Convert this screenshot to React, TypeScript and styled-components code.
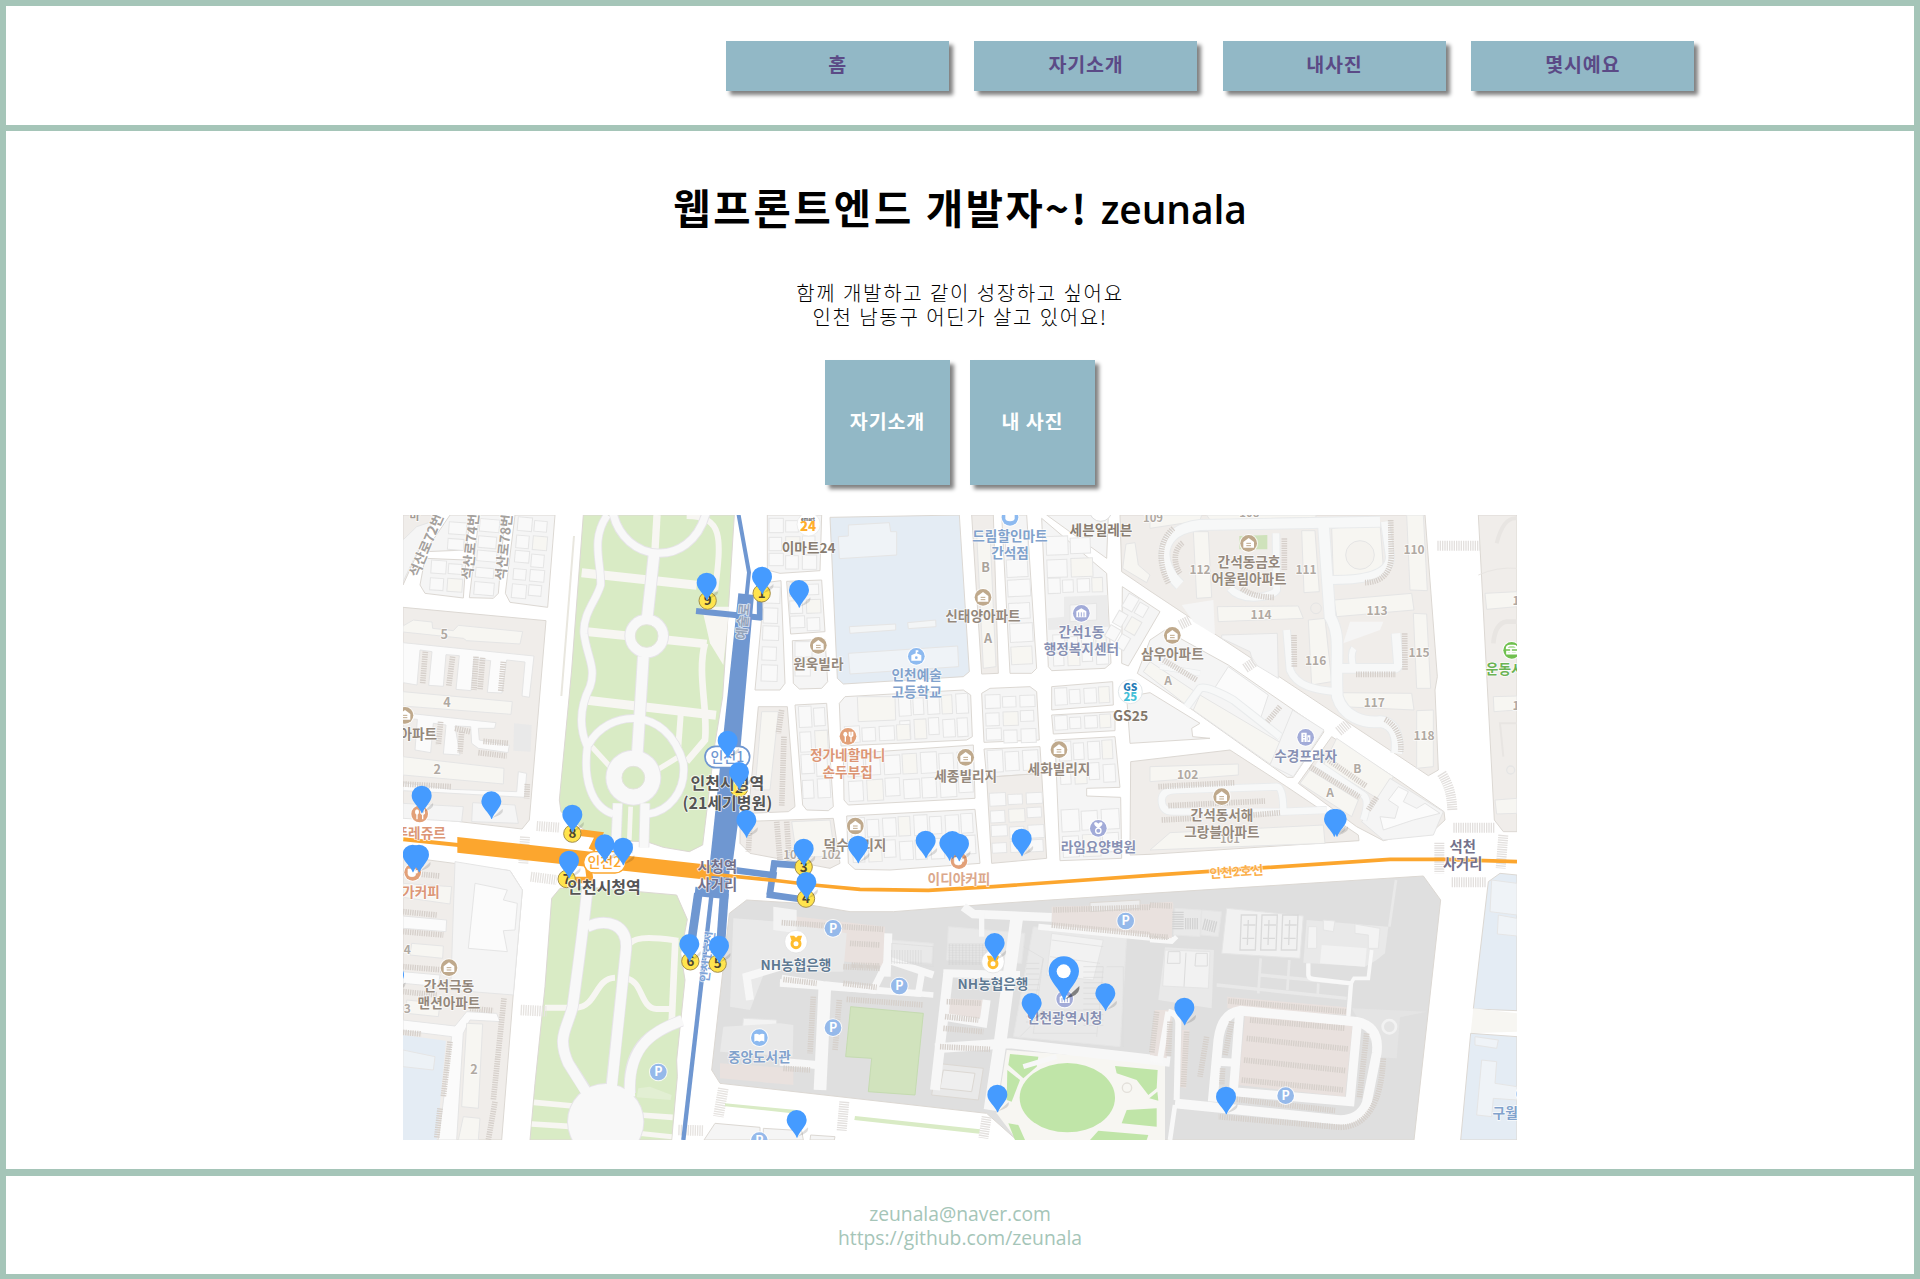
import React from "react";
import styled, { createGlobalStyle } from "styled-components";

const GlobalStyle = createGlobalStyle`
  * { box-sizing: border-box; }
  body { margin: 0; background: #fff; }
`;

const hangul = `"Noto Sans CJK KR", sans-serif`;
const mixed = `"Open Sans", "Noto Sans CJK KR", sans-serif`;
const green = "#a5c5b8";
const blue = "#92b8c6";

const Page = styled.div`
  display: flex;
  flex-direction: column;
  height: 1279px;
  border: 6px solid ${green};
  border-bottom-width: 5px;
  background: #fff;
  color: #000;
  font-family: ${mixed};
`;

const Header = styled.header`
  flex: none;
  height: 125px;
  padding: 35px 219.8px 0 0;
  display: flex;
  justify-content: flex-end;
  border-bottom: 6px solid ${green};
`;

const Nav = styled.nav`
  display: flex;
  gap: 25.4px;
`;

const NavButton = styled.a`
  display: flex;
  width: 223px;
  height: 50px;
  padding-bottom: 4px;
  align-items: center;
  justify-content: center;
  background: ${blue};
  box-shadow: 4px 4px 4px gray;
  color: #5b4a86;
  font: 700 19.5px/24px ${hangul};
  letter-spacing: 0.8px;
  text-decoration: none;
`;

const Main = styled.main`
  flex: 1;
  display: flex;
  flex-direction: column;
  align-items: center;
`;

const Title = styled.h1`
  display: flex;
  align-items: baseline;
  gap: 12px;
  margin: 46px 0 0;
  height: 60px;
  font: 700 40.5px/60px ${hangul};
`;

const TitleWord = styled.span<{ $spacing: number; $latin?: boolean }>`
  letter-spacing: ${(p) => p.$spacing}px;
  font-family: ${(p) => (p.$latin ? mixed : hangul)};
  font-size: ${(p) => (p.$latin ? 39 : 40.5)}px;
  font-weight: ${(p) => (p.$latin ? 600 : 700)};
`;

const Intro = styled.p`
  margin: 44px 0 0;
  text-align: center;
  font: 300 20px/24px ${hangul};
  letter-spacing: 1.65px;
  word-spacing: 0.6px;
`;

const Tiles = styled.div`
  display: flex;
  gap: 20px;
  margin-top: 31px;
`;

const Tile = styled.a`
  display: flex;
  width: 125px;
  height: 125px;
  padding-bottom: 3px;
  align-items: center;
  justify-content: center;
  background: ${blue};
  box-shadow: 4px 4px 4px gray;
  color: #fff;
  font: 700 19.5px/24px ${hangul};
  letter-spacing: 0.9px;
  text-decoration: none;
`;

const MapCanvas = styled.svg`
  display: block;
  width: 1114px;
  height: 625px;
  margin-top: 30px;
  font-family: ${hangul};
`;

const Footer = styled.footer`
  flex: none;
  height: 105px;
  border-top: 7px solid ${green};
  padding-top: 26px;
  text-align: center;
  color: ${green};
  font: 400 19.3px/24px ${mixed};
`;

const Line = styled.div``;

type Shape = [points: string, fill: string, outline?: string];
const L = "#f5f5f5";
const B = "#f0edea";
const C = "#f7f6f2";
const W = "#fbfbfb";
const G = "#d9ebc5";
const S = "#e4ecf4";
const K = "#dfdfdf";
const E = "#e9e9e9";
const P = "#e9e1de";
const O = "#dcd8d3";
const T = "#e5e5e5";

const Shapes = ({ items }: { items: Shape[] }) => (
  <>
    {items.map(([points, fill, outline], i) => (
      <polygon key={i} points={points} fill={fill} stroke={outline ?? "none"} strokeWidth={3} strokeLinejoin="round" />
    ))}
  </>
);

const Strokes = ({ items, color }: { items: [string, number][]; color: string }) => (
  <g fill="none" stroke={color}>
    {items.map(([d, w], i) => (
      <path key={i} d={d} strokeWidth={w} />
    ))}
  </g>
);

const Hatch = ({ items, width = 17, color = "#d6d0cb" }: { items: string[]; width?: number; color?: string }) => (
  <>
    {items.map((d, i) => (
      <path key={i} d={d} fill="none" stroke={color} strokeWidth={width} strokeDasharray="4 3" />
    ))}
  </>
);

/* Small houses are laid out as cells inside a town block. */
const Cells = ({ x, y, cols, rows, w, h, skew = 0 }: { x: number; y: number; cols: number; rows: number; w: number; h: number; skew?: number }) => (
  <g transform={`translate(${x} ${y}) rotate(${skew})`} stroke={T} strokeWidth={3}>
    {Array.from({ length: cols * rows }, (_, i) => {
      const c = i % cols;
      const r = Math.floor(i / cols);
      return (
        <rect
          key={i}
          x={c * w + 3}
          y={r * h + ((c * 7 + r * 5) % 9)}
          width={w - 7 - ((c + r) % 2) * 5}
          height={h - 9 - ((c * 3 + r) % 4) * 3}
          fill={(c * 5 + r * 3) % 7 === 1 ? C : "#f9f9f9"}
        />
      );
    })}
  </g>
);

const northWest: Shape[] = [
  ["9,15 108,15 68,95 9,225", B, O],
  ["9,90 50,50 95,35 9,215", L, T],
  ["150,15 210,15 200,120 75,125", L, O],
  ["75,145 198,150 190,264 75,250 60,225", L, O],
  ["238,15 315,15 295,250 280,265 208,263", L, O],
  ["345,15 465,15 443,292 330,277 316,250", L, O],
  ["9,292 438,332 388,930 366,957 9,915", B, O],
  ["9,348 40,330 96,336 98,355 160,362 175,346 368,365 360,402 200,392 190,385 9,366", C, T],
  ["9,398 402,438 388,562 366,558 375,456 320,450 306,549 262,547 272,452 222,446 213,542 168,538 178,437 138,434 130,529 86,526 96,425 60,420 51,525 9,518", W, T],
  ["9,545 337,575 333,613 9,588", C, T],
  ["9,608 288,638 284,655 235,655 238,690 328,706 324,728 235,715 215,700 212,650 165,648 180,735 130,732 138,645 100,640 92,728 45,720 52,628 9,625", W, T],
  ["9,740 312,775 310,822 9,795", C, T],
  ["342,640 395,645 392,725 340,722", E],
  ["9,818 155,838 350,845 355,785 380,790 374,862 9,842", W, T],
  ["218,878 345,885 355,940 215,935", L, T],
  ["9,880 190,890 185,935 9,925", L, T],
  ["550,15 1003,15 985,300 968,560 945,700 908,1005 868,1025 790,1012 740,995 640,992 560,965 483,905 478,870 515,480", G, O],
  ["905,290 988,290 970,465 930,400", C],
  ["525,78 519,78 481,558 487,558", "#e9e7df"],
  ["455,1165 480,1135 545,1130 830,1155 862,1228 842,1330 855,1410 830,1650 832,1700 815,1890 390,1890 405,1720 435,1430", G, O],
];

const southWest: Shape[] = [
  ["9,110 330,152 367,210 340,520 305,960 9,960", B, O],
  ["165,125 330,152 367,210 340,525 152,510", L, T],
  ["225,190 322,210 310,240 352,250 345,330 310,332 322,395 205,385", W, T],
  ["9,190 155,200 150,252 9,232", C, T],
  ["9,288 140,300 138,335 9,325", W, T],
  ["35,370 130,378 128,415 30,405", C, T],
  ["20,540 120,550 115,590 20,580", C, T],
  ["9,455 120,465 115,500 9,490", W, T],
  ["9,600 165,618 200,575 290,580 300,605 210,600 190,640 170,960 115,960 155,650 9,632", W, T],
  ["200,610 248,612 235,865 185,860", C, T],
  ["190,890 240,895 235,960 175,960", C, T],
  ["9,645 138,662 110,960 9,960", S],
  ["9,690 105,710 100,750 9,740", "#edf2f6", T],
];

const center: Shape[] = [
  ["-38,30 -38,15 125,15 120,182 0,190 -38,180", L, O],
  ["-45,218 3,212 15,520 0,540 -75,540", L, O],
  ["20,214 125,210 135,365 32,372", L, O],
  ["37,392 135,388 143,515 125,535 58,537 40,520", L, O],
  ["150,22 538,15 568,485 550,500 190,522 172,505", S, O],
  ["205,45 328,38 332,65 350,65 350,135 178,146 175,80 205,78", "#eff3f7", T],
  ["208,350 347,342 347,360 210,370", "#f3f5f6", T],
  ["383,338 467,330 468,350 385,356", "#f3f5f6", T],
  ["205,430 533,408 536,470 210,492", "#eff3f7", T],
  ["178,580 195,560 550,540 572,555 577,680 560,690 183,708", L, O],
  ["232,560 345,560 347,630 235,635", C, T],
  ["190,732 580,705 585,865 205,885 192,870", L, O],
  ["45,585 140,580 160,890 145,902 80,900 68,885", L, O],
  ["-65,590 22,590 45,890 25,905 -95,910", B, O],
  ["-55,605 -5,605 -30,840 -75,840", C, T],
  ["605,550 630,535 750,530 770,545 778,690 612,697", L, O],
  ["612,717 780,710 785,790 620,802", L, O],
  ["620,802 785,790 800,1045 635,1060", B, O],
  ["575,15 640,15 655,490 605,492", B, O],
  ["590,70 630,70 648,470 610,475", C, T],
  ["665,15 740,15 770,475 755,490 690,490", L, O],
  ["785,25 980,190 993,460 975,475 815,482 805,470", L, O],
  ["800,15 985,15 980,145", L, O],
  ["1027,230 1140,305 1045,468 1025,460", L, O],
  ["815,530 998,515 1000,585 815,600", L, O],
  ["815,615 1005,605 1005,662 820,672", L, O],
  ["825,690 1005,680 1020,832 920,835 920,858 1022,862 1025,1045 840,1052", L, O],
  ["200,918 585,898 600,1060 330,1080 225,1078 205,1060", L, O],
  ["-120,935 160,925 180,1060 150,1075 -90,1030 -120,1000", B, O],
  ["35,935 150,930 165,1040 50,1040", C, T],
];

const communityCenter: Shape[] = [
  ["852,260 982,255 985,350 805,360 803,325 852,320", "#ebebeb"],
  ["870,285 950,280 950,330 870,335", "#f5f5f5", T],
];

const northEast: Shape[] = [
  ["-90,15 825,15 862,500 855,540 865,780 835,797 0,243 -85,185", B, O],
  ["-72,102 -45,98 -35,165 0,195 -10,218 -82,175", C, T],
  ["0,15 155,15 150,32 0,55", C, T],
  ["170,15 498,15 498,22 180,30", C, T],
  ["130,65 175,65 185,262 140,265", C, T],
  ["268,78 352,75 352,118 268,118", "#cfe2bb"],
  ["455,62 495,62 508,245 462,248", C, T],
  ["770,15 820,15 832,242 780,240", C, T],
  ["545,55 690,40 700,170 660,200 550,205", C, T],
  ["202,290 445,288 460,325 205,335", C, T],
  ["552,270 785,250 792,300 560,320", C, T],
  ["475,330 525,325 545,515 485,525", C, T],
  ["790,310 830,312 842,535 800,535", C, T],
  ["570,548 785,550 792,600 575,590", C, T],
  ["800,602 850,600 850,770 800,775", C, T],
  ["95,285 190,270 195,375 130,335", L],
  ["215,375 382,370 385,505 310,460 300,425 215,385", L, T],
  ["600,335 700,335 690,360 580,400", L],
  ["0,390 45,360 235,465 510,655 522,665 430,802 412,802 100,580 -38,490", L, O],
  ["-20,485 0,455 135,545 105,582", C, T],
  ["235,470 355,555 330,630 190,540", W, T],
  ["150,555 395,700 360,762 130,600", C, T],
  ["428,600 522,660 430,800 360,765", L, T],
  ["545,680 730,800 882,905 885,930 858,955 700,992 620,950 445,820", B, O],
  ["560,685 730,800 690,870 520,765", C, T],
  ["480,780 625,870 605,920 450,820", C, T],
  ["720,805 880,905 850,975 700,990 635,935", L, T],
  ["745,830 775,845 760,875 800,895 825,880 870,910 790,930 700,960 690,920 735,925 745,890 715,870", W, T],
  ["-70,560 0,548 150,640 125,655 128,680 180,685 -60,700", L, O],
  ["-58,755 240,720 410,830 625,975 627,992 0,1033 -60,1035", B, O],
  ["0,770 265,762 265,795 0,815", C, T],
  ["60,968 520,945 525,1000 0,1020", C, T],
  ["985,15 1101,15 1101,965 1060,965 1033,930", B, O],
  ["1005,250 1101,245 1101,290 1010,298", C, T],
  ["1030,560 1101,558 1101,600 1032,605", C, T],
  ["1035,870 1101,865 1101,910 1040,912", C, T],
];

const civic: Shape[] = [
  ["988,1210 1040,1170 1200,1180 1350,1205 1480,1205 1800,1180 2250,1150 3070,1098 3122,1170 3042,1890 1850,1890 1760,1810 1140,1740 960,1720 935,1680", K, O],
  ["1150,1215 1455,1250 1450,1370 1150,1330", P],
  ["1000,1225 1140,1235 1340,1270 1330,1385 1190,1385 1100,1370 1050,1500 990,1490", E],
  ["1120,1190 1190,1200 1190,1270 1120,1260", "#f3f3f3"],
  ["1030,1525 1130,1530 1130,1600 1025,1590", "#f3f3f3", T],
  ["1140,1540 1180,1545 1178,1640 960,1625 970,1550", E],
  ["960,1660 1180,1675 1180,1725 960,1705", P],
  ["1475,1290 1600,1300 1595,1360 1475,1350", E, T],
  ["1645,1250 1875,1270 1865,1360 1640,1350", E, T],
  ["1955,1190 2320,1180 2315,1285 1955,1250", P],
  ["2070,1178 2220,1170 2220,1195 2070,1205", "#eee", O],
  ["1900,1250 2180,1280 2160,1610 1840,1580", E, T],
  ["1955,1270 2110,1290 2080,1410 1940,1395", "#f2f2f2", T],
  ["1640,1465 1750,1470 1740,1525 1635,1515", P],
  ["1610,1660 1750,1675 1735,1770 1595,1755", E, O],
  ["1630,1680 1725,1690 1715,1745 1620,1735", "#efefef", O],
  ["1352,1490 1570,1510 1545,1755 1405,1745 1415,1645 1337,1640", "#d1e3bd", "#c5dbb1"],
  ["1820,1620 2295,1655 2295,1890 1850,1890 1790,1810", C],
  ["1830,1632 1915,1640 1910,1670 1870,1705 1825,1665", "#c0e5a8"],
  ["1822,1680 1860,1710 1835,1775 1820,1770", "#c0e5a8"],
  ["2145,1668 2273,1680 2270,1735 2245,1755 2210,1710 2150,1690", "#c0e5a8"],
  ["2248,1765 2272,1745 2275,1772", "#c0e5a8"],
  ["2180,1800 2270,1795 2270,1850 2165,1840", "#c0e5a8"],
  ["2095,1862 2245,1875 2240,1890 2070,1890", "#c0e5a8"],
  ["1825,1840 1855,1845 1875,1890 1845,1890", "#c0e5a8"],
  ["1365,1818 1740,1858 1738,1871 1363,1830", G],
  ["975,1780 1190,1800 1190,1811 975,1789", G],
  ["912,1890 945,1840 1080,1852 1080,1890", L, O],
  ["1090,1855 1205,1862 1210,1890 1090,1890", L, O],
  ["1232,1875 1305,1880 1303,1890 1230,1890", L, O],
];

const cityEast: Shape[] = [
  ["0,250 68,245 65,355 0,345", P],
  ["75,265 155,270 150,350 70,345", E, T],
  ["155,270 215,275 205,350 152,345", E, T],
  ["230,265 460,288 450,415 215,400", "#f1f1f1", T],
  ["45,382 192,390 185,565 25,540", E],
  ["45,390 180,395 175,505 38,498", "#f2f2f2", T],
  ["470,300 715,320 705,400 680,420 645,440 460,428", E],
  ["475,320 500,320 500,385 472,385", "#f3f3f3", T],
  ["515,375 650,385 645,440 510,430", "#f2f2f2"],
  ["520,300 555,303 550,335 520,330", "#f3f3f3", T],
  ["615,312 690,325 685,385 655,385 655,345 615,340", "#f3f3f3", T],
  ["605,565 830,575 750,592 740,715 690,712", "#e4e4e4"],
  ["232,530 590,562 590,585 232,565", P],
  ["285,585 608,615 585,830 265,795", P],
  ["15,570 70,570 50,715 0,705", P],
  ["95,630 118,630 108,805 90,800", P],
  ["1015,185 1050,160 1101,165 1101,572 970,567", S, O],
  ["1025,180 1101,190 1101,285 1020,275", "#eff3f7", T],
  ["1045,285 1101,295 1101,348 1042,342", "#eff3f7", T],
  ["970,565 1101,580 1101,635 962,640", C],
  ["962,640 1101,650 1101,960 932,960", S, O],
  ["995,720 1040,725 1035,790 1101,800 1101,840 1030,835 1025,890 980,885", "#eff3f7", T],
  ["975,650 1045,660 1040,685 975,675", "#eff3f7", T],
];

type Label = [text: string, x: number, y: number, color: string, size?: number, rotate?: number];
const brown = "#94887c";
const violet = "#8790b3";
const navy = "#81a2cc";
const labels: Label[] = [
  ["마", 44, 30, "#a39b94", 34],
  ["석산로72번", 92, 112, "#a5a19d", 41, -67],
  ["석산로74번", 226, 112, "#a5a19d", 41, -84],
  ["석산로78번길", 328, 95, "#a5a19d", 41, -84],
  ["5", 133, 387, "#b0a9a2", 38],
  ["4", 141, 590, "#b0a9a2", 38],
  ["2", 112, 793, "#b0a9a2", 38],
  ["아파트", 55, 686, brown],
  ["뚜레쥬르", 62, 984, "#dc9676"],
  ["메가커피", 44, 1160, "#dc9676"],
  ["4", 22, 1331, "#b0a9a2", 36],
  ["3", 22, 1508, "#b0a9a2", 36],
  ["2", 222, 1693, "#b0a9a2", 38],
  ["간석극동", 147, 1444, brown],
  ["맨션아파트", 147, 1494, brown],
  ["시청역", 952, 1087, "#74718b", 43],
  ["사거리", 952, 1139, "#74718b", 43],
  ["이마트24", 1226, 128, "#887d71"],
  ["원욱빌라", 1255, 476, brown],
  ["인천예술", 1550, 510, navy],
  ["고등학교", 1550, 561, navy],
  ["드림할인마트", 1830, 92, navy],
  ["간석점", 1830, 143, navy],
  ["세븐일레븐", 2103, 74, "#887d71"],
  ["B", 1757, 186, "#aaa39b", 38],
  ["A", 1764, 398, "#aaa39b", 38],
  ["신태양아파트", 1749, 333, brown],
  ["간석1동", 2044, 382, violet],
  ["행정복지센터", 2044, 431, violet],
  ["삼우아파트", 2317, 447, brown],
  ["GS25", 2192, 632, "#82776a", 42],
  ["정가네할머니", 1343, 750, "#dc9676"],
  ["손두부집", 1343, 801, "#dc9676"],
  ["세종빌리지", 1697, 813, brown],
  ["세화빌리지", 1977, 792, brown],
  ["109", 2259, 36, "#b0a9a2", 34],
  ["108", 2548, 20, "#b0a9a2", 34],
  ["간석동금호", 2547, 171, brown],
  ["어울림아파트", 2547, 221, brown],
  ["110", 3042, 132, "#b0a9a2", 36],
  ["111", 2718, 191, "#b0a9a2", 36],
  ["112", 2400, 191, "#b0a9a2", 36],
  ["113", 2931, 316, "#b0a9a2", 36],
  ["114", 2583, 327, "#b0a9a2", 36],
  ["115", 3057, 442, "#b0a9a2", 36],
  ["116", 2747, 464, "#b0a9a2", 36],
  ["117", 2923, 590, "#b0a9a2", 36],
  ["118", 3072, 689, "#b0a9a2", 36],
  ["102", 2363, 807, "#b0a9a2", 36],
  ["101", 2490, 1000, "#b0a9a2", 34],
  ["1", 3348, 286, "#b0a9a2", 36],
  ["1", 3348, 600, "#b0a9a2", 36],
  ["A", 2304, 526, "#b0a9a2", 36],
  ["A", 2790, 862, "#b0a9a2", 36],
  ["B", 2872, 788, "#b0a9a2", 36],
  ["수경프라자", 2717, 753, violet],
  ["운동시설", 3333, 491, "#6bb354"],
  ["간석동서해", 2466, 931, brown],
  ["그랑블아파트", 2466, 982, brown],
  ["101", 1180, 1046, "#b0a9a2", 34],
  ["102", 1293, 1046, "#b0a9a2", 34],
  ["덕수빌리지", 1365, 1020, brown],
  ["이디야커피", 1677, 1122, "#dba88c"],
  ["라임요양병원", 2095, 1026, violet],
  ["석천", 3188, 1025, "#74718b", 43],
  ["사거리", 3188, 1078, "#74718b", 43],
  ["인천2호선", 2510, 1099, "#fbae4a", 38, -4],
  ["NH농협은행", 1188, 1380, "#5f7a93"],
  ["NH농협은행", 1779, 1438, "#5f7a93"],
  ["중앙도서관", 1078, 1655, navy],
  ["인천광역시청", 1994, 1539, violet],
  ["구월중학교", 3372, 1825, navy],
  ["인천1호선", 935, 1342, "#7da3d8", 36, -83],
  ["예술로", 1043, 336, "#94a3ba", 40, -84],
];

const MapText = ({ item: [text, x, y, color, size = 41, rotate] }: { item: Label }) => (
  <text
    x={x}
    y={y}
    fill={color}
    stroke="#fff"
    strokeOpacity={0.75}
    strokeWidth={5}
    strokeLinejoin="round"
    paintOrder="stroke"
    fontSize={size}
    fontWeight={700}
    textAnchor="middle"
    transform={rotate ? `rotate(${rotate} ${x} ${y})` : undefined}
  >
    {text}
  </text>
);

const Badge = ({ x, y, color, children }: { x: number; y: number; color: string; children?: React.ReactNode }) => (
  <g transform={`translate(${x} ${y})`}>
    <circle r={28} fill="#fff" opacity={0.8} />
    <circle r={25} fill={color} />
    {children}
  </g>
);

const House = ({ x, y }: { x: number; y: number }) => (
  <Badge x={x} y={y} color="#bfa98c">
    <path d="M0-16 16-4V13H-16V-4Z" fill="#fff" />
    <path d="M-7 0H7M-7 7H7" stroke="#bfa98c" strokeWidth={3} />
  </Badge>
);

const Food = ({ x, y }: { x: number; y: number }) => (
  <Badge x={x} y={y} color="#e2a078">
    <ellipse cx={-8} cy={-6} rx={6} ry={8} fill="#fff" />
    <path d="M-8 0V16M9 0V16M4-14V-2Q9 4 14-2V-14M9-14V2" stroke="#fff" strokeWidth={4} fill="none" />
  </Badge>
);

const Cafe = ({ x, y }: { x: number; y: number }) => (
  <Badge x={x} y={y} color="#e2a078">
    <path d="M-14-10H9V5Q9 13-2 13T-14 5ZM9-6h5v8H9" fill="#fff" stroke="#fff" strokeWidth={2} />
  </Badge>
);

const Parking = ({ x, y }: { x: number; y: number }) => (
  <Badge x={x} y={y} color="#95b9ea">
    <text y={13} textAnchor="middle" fill="#fff" fontSize={37} fontWeight={700}>P</text>
  </Badge>
);

const Office = ({ x, y }: { x: number; y: number }) => (
  <Badge x={x} y={y} color="#a2abd8">
    <path d="M-15-6 0-15 15-6V12H-15Z" fill="#fff" />
    <path d="M-8-3V10M0-3V10M8-3V10" stroke="#a2abd8" strokeWidth={3} />
  </Badge>
);

const Bank = ({ x, y }: { x: number; y: number }) => (
  <g transform={`translate(${x} ${y})`}>
    <circle r={34} fill="#fff" stroke="#ddd" strokeWidth={2} />
    <path d="M-18-18H-6L0-12 6-18H18L14-4H-14Z" fill="#ffbd2e" />
    <circle cy={6} r={12} fill="none" stroke="#ffbd2e" strokeWidth={9} />
  </g>
);

const exits: [string, number, number][] = [
  ["9", 923, 272], ["1", 1085, 250], ["2", 1017, 835], ["8", 517, 971], ["7", 500, 1107],
  ["6", 871, 1354], ["5", 953, 1361], ["3", 1211, 1071], ["4", 1218, 1166],
];

const Exit = ({ label, x, y }: { label: string; x: number; y: number }) => (
  <g transform={`translate(${x} ${y})`}>
    <circle r={26} fill="#ffe44d" stroke="#a58f4a" strokeWidth={3} />
    <text y={14} textAnchor="middle" fill="#4d4630" fontSize={40} fontWeight={700}>{label}</text>
  </g>
);

const pins: [number, number][] = [
  [920, 218], [1086, 200], [1197, 240], [983, 692], [1017, 786], [65, 857], [274, 874], [517, 914], [1039, 930],
  [-18, 1395], [38, 1034], [57, 1034], [614, 1003], [669, 1013], [507, 1052], [868, 1302], [957, 1307],
  [1211, 1016], [1374, 1007], [1219, 1116], [1577, 992], [1657, 993], [1648, 999], [1677, 1001], [1865, 986],
  [1784, 1299], [1895, 1479], [2116, 1450], [1792, 1754], [1190, 1830], [2353, 1493], [2478, 1760], [2802, 927], [2810, 927],
];

const Pin = ({ x, y }: { x: number; y: number }) => (
  <g transform={`translate(${x} ${y})`}>
    <path d="M3 50 34 22Q38 35 20 43Z" fill="#000" opacity={0.13} />
    <path d="M-30 0A30 30 0 0 1 30 0C30 18 8 34 2 53H0C-6 34-30 20-30 0Z" fill="#459bff" />
  </g>
);

const NeighbourhoodMap = () => (
  <MapCanvas viewBox="9 15 3342 1875" preserveAspectRatio="none" role="img" aria-label="인천시청 지도">
    <rect x={9} y={15} width={3342} height={1875} fill="#fff" />
    <Shapes items={northWest} />
    <Cells x={145} y={35} cols={1} rows={2} w={60} h={45} skew={4} />
    <Cells x={92} y={150} cols={2} rows={2} w={52} h={48} skew={4} />
    <Cells x={238} y={25} cols={1} rows={5} w={66} h={47} skew={5} />
    <Cells x={352} y={20} cols={2} rows={5} w={50} h={50} skew={5} />
    <Hatch
      items={[
        "M76 425 68 520", "M158 440 146 530", "M228 440 222 540", "M248 443 240 540", "M310 455 302 545",
        "M165 655 210 665", "M185 665 180 730", "M122 635 115 705", "M250 694 325 700", "M235 728 320 738", "M9 822 155 830",
        "M382 822 380 865",
      ]}
    />
    <Hatch width={30} color="#e6e3e0" items={["M410 948 480 953", "M375 980 370 1060", "M392 1100 470 1110", "M625 1010 700 1015"]} />
    <Strokes
      color={C}
      items={[
        ["M545 188 890 226", 27], ["M560 365 920 402", 26], ["M555 570 948 616", 27], ["M771 15 765 120", 22],
        ["M860 18C970 20 965 80 945 245", 18], ["M915 400C890 490 925 600 915 690L860 755", 20], ["M842 615 835 710", 18],
        ["M575 710 630 770", 16], ["M840 738 775 778", 16], ["M692 890 688 990", 14],
        ["M435 1493H530C590 1490 585 1405 645 1403", 18], ["M680 1405C730 1415 720 1495 770 1497H815", 18],
        ["M690 1300C710 1275 780 1285 835 1292", 18], ["M826 1290 815 1540", 20],
        ["M402 1777 520 1788", 17], ["M395 1842 520 1850", 17], ["M720 1815 818 1822", 17], ["M715 1870 815 1880", 15],
      ]}
    />
    <Strokes
      color="#e6e4e8"
      items={[
        ["M638 5C670 160 870 180 918 10", 28], ["M762 135 742 320", 38], ["M730 440 712 730", 38],
        ["M622 15C570 90 605 160 602 225C590 270 548 310 552 370C560 440 590 470 570 530C535 600 540 660 562 710C550 800 570 890 640 912", 26],
        ["M565 705C620 600 800 580 850 760C860 850 800 905 745 912", 26], ["M653 880 648 1000", 32], ["M735 880 732 1012", 32],
        ["M562 1140C545 1300 530 1400 518 1490C500 1560 470 1580 505 1660L570 1760", 36],
        ["M562 1250C620 1225 685 1240 678 1320L632 1750", 36], ["M845 1532C770 1560 680 1600 690 1750", 36],
      ]}
    />
    <g fill="#e6e4e8"><circle cx={740} cy={378} r={67} /><circle cx={700} cy={803} r={84} /><circle cx={617} cy={1835} r={116} /></g>
    <Strokes
      color="#f8f8f8"
      items={[
        ["M638 5C670 160 870 180 918 10", 22], ["M762 135 742 320", 32], ["M730 440 712 730", 32],
        ["M622 15C570 90 605 160 602 225C590 270 548 310 552 370C560 440 590 470 570 530C535 600 540 660 562 710C550 800 570 890 640 912", 21],
        ["M565 705C620 600 800 580 850 760C860 850 800 905 745 912", 21], ["M653 880 648 1002", 27], ["M735 880 732 1014", 27],
        ["M562 1138C545 1300 530 1400 518 1490C500 1560 470 1580 505 1660L570 1765", 31],
        ["M562 1250C620 1225 685 1240 678 1320L632 1760", 31], ["M847 1531C770 1560 680 1600 690 1760", 31],
      ]}
    />
    <g fill="#f8f8f8"><circle cx={740} cy={378} r={64} /><circle cx={700} cy={803} r={81} /><circle cx={617} cy={1835} r={113} /></g>
    <g fill={G} stroke="#e3e3dd" strokeWidth={3}><circle cx={740} cy={378} r={34} /><circle cx={700} cy={803} r={34} /></g>
    <polygon points="715,1735 750,1730 815,1755 812,1770 710,1762" fill="#e2efd3" />
    <g transform="translate(0 930)">
      <Shapes items={southWest} />
      <Hatch
        items={[
          "M9 158 120 168", "M9 275 110 285", "M9 335 130 345", "M9 440 130 450", "M9 515 110 525", "M9 637 65 642", "M210 565 280 572",
          "M312 535 280 840", "M150 665 130 830", "M285 845 265 960", "M120 865 110 955",
        ]}
      />
      <Hatch width={32} color="#e6e3e0" items={["M362 570 440 574", "M835 930 910 932", "M970 805 955 890"]} />
    </g>
    <g transform="translate(1140 0)">
      <Shapes items={center} />
      <Cells x={-36} y={25} cols={3} rows={3} w={50} h={52} />
      <Cells x={24} y={218} cols={2} rows={3} w={50} h={50} skew={-2} />
      <Cells x={-50} y={230} cols={1} rows={5} w={55} h={58} skew={2} />
      <Cells x={42} y={395} cols={1} rows={2} w={58} h={55} />
      <Cells x={352} y={560} cols={5} rows={2} w={43} h={68} skew={-3} />
      <Cells x={190} y={650} cols={4} rows={1} w={52} h={58} skew={-3} />
      <Cells x={198} y={738} cols={7} rows={2} w={55} h={72} skew={-3} />
      <Cells x={52} y={590} cols={2} rows={4} w={45} h={72} skew={-3} />
      <Cells x={612} y={555} cols={3} rows={3} w={52} h={50} skew={-2} />
      <Cells x={618} y={722} cols={3} rows={1} w={53} h={75} skew={-3} />
      <Cells x={625} y={850} cols={3} rows={4} w={55} h={48} skew={-3} />
      <Cells x={672} y={80} cols={1} rows={6} w={75} h={65} skew={-3} />
      <Cells x={795} y={80} cols={2} rows={2} w={72} h={65} skew={-2} />
      <Cells x={800} y={205} cols={4} rows={1} w={44} h={55} skew={-2} />
      <Cells x={815} y={375} cols={4} rows={2} w={43} h={50} skew={-2} />
      <Shapes items={communityCenter} />
      <Cells x={820} y={535} cols={4} rows={1} w={44} h={60} skew={-3} />
      <Cells x={820} y={618} cols={4} rows={1} w={45} h={52} skew={-3} />
      <Cells x={833} y={695} cols={4} rows={2} w={43} h={68} skew={-3} />
      <Cells x={840} y={900} cols={3} rows={2} w={60} h={75} skew={-3} />
      <Cells x={210} y={925} cols={8} rows={2} w={47} h={70} skew={-3} />
      <Cells x={1045} y={248} cols={2} rows={3} w={42} h={54} skew={30} />
      <Hatch items={["M12 680 5 890", "M5 600 -5 670", "M-90 940 -95 1025", "M-10 935 0 1050", "M20 935 28 1050"]} />
    </g>
    <g transform="translate(2250 0)">
      <Shapes items={northEast} />
      <Strokes
        color="#e9ebec"
        items={[
          ["M90 225C20 160 20 60 150 45L690 35", 36], ["M520 40 540 320C575 380 555 430 562 560C580 620 640 640 690 635C740 640 745 690 740 730", 38],
          ["M705 35 720 140C720 190 660 210 545 210", 30], ["M410 360 420 480C440 530 500 540 555 545", 26],
          ["M575 475H730Q745 475 745 460L738 370", 32], ["M610 475Q600 430 612 415", 24],
          ["M240 235C280 280 370 260 380 240L378 70", 26],
          ["M110 590 150 535Q170 525 250 570L390 680", 26], ["M30 470 150 490", 18],
          ["M395 905H70Q35 905 35 870Q35 840 80 840L380 830Q400 830 400 905L530 900", 24],
          ["M500 760 640 855Q660 870 640 930", 24],
        ]}
      />
      <Strokes
        color="#f7f8f8"
        items={[
          ["M90 225C20 160 20 60 150 45L690 35", 30], ["M520 40 540 320C575 380 555 430 562 560C580 620 640 640 690 635C740 640 745 690 740 730", 32],
          ["M705 35 720 140C720 190 660 210 545 210", 24], ["M410 360 420 480C440 530 500 540 555 545", 20],
          ["M575 475H730Q745 475 745 460L738 370", 26], ["M610 475Q600 430 612 415", 18],
          ["M240 235C280 280 370 260 380 240L378 70", 20],
          ["M110 590 150 535Q170 525 250 570L390 680", 20], ["M30 470 150 490", 14],
          ["M395 905H70Q35 905 35 870Q35 840 80 840L380 830Q400 830 400 905L530 900", 19],
          ["M500 760 640 855Q660 870 640 930", 19],
        ]}
      />
      <circle cx={630} cy={135} r={43} fill="#f4f2ee" stroke={T} strokeWidth={3} />
      <circle cx={498} cy={295} r={16} fill={B} stroke={T} strokeWidth={3} />
      <circle cx={1082} cy={780} r={12} fill="none" stroke={T} strokeWidth={4} />
      <Hatch
        items={[
          "M70 55C30 90 20 150 55 220", "M98 98C70 120 70 160 90 190", "M722 30 724 140Q720 215 645 218", "M403 85 403 180", "M275 235Q310 262 372 262",
          "M432 375 433 470", "M764 370 765 480", "M618 493 738 493", "M705 628C745 650 755 690 752 725",
          "M25 830 255 818", "M55 887 345 873", "M35 930 130 925M310 915 390 908", "M480 770 630 862", "M535 750 648 828", "M680 862 655 900",
          "M390 590 352 635", "M40 450 140 510",
        ]}
      />
      <Hatch
        width={30}
        color="#e3e0de"
        items={[
          "M862 107H990", "M90 345 120 330", "M285 475 315 455", "M565 665 595 640",
          "M875 790C900 830 905 860 907 900", "M910 953H1035", "M868 998 868 1090", "M905 1117H1010", "M1060 975 1052 1075",
        ]}
      />
      <Strokes color="#e8e5e2" items={[["M985 195Q1040 170 1101 175", 3], ["M1030 400Q1035 340 1070 335H1101", 14], ["M1060 740 1050 640H1101", 6], ["M1040 100Q1060 20 1101 25", 12]]} />
    </g>
    <Shapes items={civic} />
    <Strokes
      color="#f7f7f7"
      items={[
        ["M1145 1405 1275 1425 1420 1440 1465 1350 1600 1395", 22], ["M1140 1415 1600 1455", 16], ["M1275 1420 1260 1740", 38], ["M1465 1270 1460 1400", 24],
        ["M1140 1420 1555 1450 1565 1390", 20], ["M1690 1190 1720 1212 1955 1222", 26], ["M1850 1225 1800 1600 1770 1800", 38],
        ["M1645 1390 1605 1740", 30], ["M1630 1390 1860 1395", 24], ["M1630 1520 1750 1540 1760 1470", 24],
        ["M1605 1615 1830 1600 2310 1655", 30], ["M1140 1655 1250 1665", 24], ["M1915 1250 2320 1290", 18],
        ["M1870 1670 1970 1640", 15], ["M1050 1470 1040 1400 1140 1370", 24], ["M1745 1210V1280", 16],
      ]}
    />
    <Hatch
      items={[
        "M1145 1238 1450 1258", "M1330 1370 1440 1375", "M1350 1300 1440 1305", "M1355 1365 1440 1368", "M1150 1408 1250 1420", "M1330 1420 1430 1432",
        "M1340 1468 1570 1485", "M1240 1460 1230 1630", "M1318 1470 1305 1620", "M1150 1675 1230 1680", "M1640 1475 1745 1480", "M1635 1520 1735 1530",
        "M1630 1555 1750 1565", "M1620 1610 1770 1618", "M1960 1200 2310 1190", "M1955 1245 2310 1280",
      ]}
    />
    <Hatch width={30} color="#e3e0de" items={["M1333 1775 1325 1862", "M1760 1820 1750 1885"]} />
    <g stroke="#ddd" strokeWidth={2} fill="none">
      <path d="M1475 1300 1600 1310V1370L1475 1355ZM1870 1310 1930 1345 1890 1550 1860 1580M1930 1345 1900 1570H2090M2110 1370 2090 1580M1955 1290 2110 1310M1950 1340 2100 1360M2010 1350 2005 1400M1900 1500H2080M2120 1370 2170 1370V1610" />
    </g>
    {Array.from({ length: 13 }, (_, i) => (
      <path key={i} d={`M${1648 + i * 10} 1302V1365M${1645} ${1302 + i * 5}H1790`} stroke="#d3d3d3" strokeWidth={1.5} />
    ))}
    {Array.from({ length: 12 }, (_, i) => (
      <path key={i} d={`M${1475 + i * 8} 1320V1362M1878 ${1360 + i * 16}h40M2050 ${1370 + i * 16}h60`} stroke="#d3d3d3" strokeWidth={1.5} />
    ))}
    <ellipse cx={2002} cy={1763} rx={143} ry={104} fill="#c0e5a8" />
    <circle cx={2181} cy={1733} r={14} fill="none" stroke="#e3e0da" strokeWidth={4} />
    <g transform="translate(2250 930)">
      <Shapes items={cityEast} />
      <Strokes
        color="#e9e9e9"
        items={[["M332 415 325 520M418 420 412 510M505 490 503 525", 8], ["M200 495 590 535M330 465 590 490", 10], ["M738 180 718 320", 8]]}
      />
      <Strokes
        color="#f8f8f8"
        items={[
          ["M475 430V465Q475 475 490 477L603 490 595 590", 13], ["M603 490 612 475H655L665 390", 11],
          ["M188 845 205 660Q215 580 270 572L620 605Q690 620 680 700L650 850Q630 900 570 900L75 850", 29],
          ["M268 585 250 815 600 845 622 610", 27], ["M205 725 255 728", 24], ["M55 575 30 720 0 715M55 575Q85 580 85 610L80 840", 18],
          ["M75 855 60 960", 14], ["M0 360 65 365 80 350", 14],
        ]}
      />
      {[270, 332, 394].map((x) => (
        <path key={x} d={`M${x + 4} 285h46l-4 105h-46ZM${x + 10} 315h36M${x + 7} 355h36M${x + 25} 300l-3 75`} fill="none" stroke="#dadada" strokeWidth={4} />
      ))}
      <path d="M108 398 102 500M55 395H90V430H52ZM138 400H172V438H135Z" fill="none" stroke="#dcdcdc" strokeWidth={3} />
      <Hatch
        items={[
          "M235 543 588 575", "M300 600 585 625", "M290 655 595 687", "M282 720 588 752", "M275 780 580 810", "M245 605 225 705", "M218 745 215 795",
          "M260 838 555 872", "M650 640 628 835", "M700 715Q690 920 570 922L205 890", "M20 575 5 700", "M60 605 55 710", "M110 635 100 800", "M170 650 150 770",
          "M0 255 65 258", "M0 348 55 352",
        ]}
      />
      <Hatch width={34} color="#d3d3d3" items={["M105 311H145", "M160 312 200 322", "M84 275V330"]} />
      <circle cx={718} cy={620} r={20} fill="none" stroke="#f2f2f2" strokeWidth={8} />
    </g>
    <Strokes
      color="#6f97d1"
      items={[
        ["M1015 10 1047 187 1040 255", 12], ["M888 303 1085 323", 18], ["M1079 330V265", 17], ["M1013 860 985 1075", 22],
        ["M1000 1080 1130 1097", 20], ["M1124 1052 1109 1155", 20], ["M1115 1060 1195 1066", 20], ["M1100 1153 1200 1167", 20],
        ["M885 1144 986 1154", 28], ["M895 1150 875 1290", 26], ["M973 1150 963 1290", 27], ["M935 1150 850 1890", 13],
      ]}
    />
    <polygon points="1015,250 1062,255 983,1150 920,1150" fill="#6f97d1" />
    <Strokes color="#fca62e" items={[["M9 988 175 1005", 12], ["M540 968 597 975 575 1020M565 1070 570 1110H525", 20], ["M930 1092 1140 1113 1240 1125 1380 1138 1585 1141 1780 1130 2250 1096 2970 1048 3130 1048 3351 1055", 11]]} />
    <polygon points="172,981 932,1065 935,1111 172,1028" fill="#fca62e" />
    {labels.map((item, i) => <MapText key={i} item={item} />)}
    <House x={2546} y={100} /><House x={1749} y={262} /><House x={2317} y={376} /><House x={1255} y={406} /><House x={1697} y={742} />
    <House x={1977} y={719} /><House x={1366} y={948} /><House x={2465} y={860} /><House x={147} y={1373} /><House x={15} y={616} />
    <Food x={1344} y={679} /><Food x={59} y={912} /><Cafe x={38} y={1087} /><Cafe x={1677} y={1052} />
    <Parking x={1299} y={1255} /><Parking x={1498} y={1428} /><Parking x={1299} y={1553} /><Parking x={2177} y={1233} />
    <Parking x={2657} y={1757} /><Parking x={775} y={1686} /><Parking x={1078} y={1892} />
    <Office x={2044} y={310} /><Office x={1994} y={1467} />
    <Badge x={2717} y={682} color="#a2abd8">
      <path d="M-13-14H3V14H-13ZM5-6H14V14H5Z" fill="#fff" />
      <path d="M-8-7H-2M-8 0H-2M-5 6V14M9 0V9" stroke="#a2abd8" strokeWidth={3} />
    </Badge>
    <Badge x={1549} y={439} color="#8dbaf0">
      <path d="M-15-3 0-10 15-3V13H-15ZM-2-18H6V-12H2V-6H-2Z" fill="#fff" />
      <circle cy={4} r={4} fill="#8dbaf0" />
    </Badge>
    <Badge x={2095} y={955} color="#a2abd8"><path d="M0 0C-22-14-10-24 0-14C10-24 22-14 0 0" fill="#fff" /><circle cy={7} r={8} fill="none" stroke="#fff" strokeWidth={4} /></Badge>
    <Badge x={1830} y={22} color="#8dbaf0"><path d="M-14-8H14V3Q14 12 0 12T-14 3Z" fill="#fff" /></Badge>
    <Badge x={1078} y={1583} color="#8dbaf0"><path d="M-15-10Q-8-14 0-9Q8-14 15-10V12Q8 7 0 12Q-8 7-15 12Z" fill="#fff" /></Badge>
    <Badge x={3335} y={421} color="#70c04f"><path d="M-15-6Q-15-14-5-14H5Q15-14 15-6ZM-14 4H15V10H-14ZM-2-6V12" stroke="#fff" fill="none" strokeWidth={5} /></Badge>
    <Badge x={3374} y={1752} color="#8dbaf0" />
    <circle cx={2102} cy={0} r={34} fill="#fff" stroke="#ddd" strokeWidth={3} />
    <circle cx={1226} cy={43} r={35} fill="#fff" stroke="#e5e5e5" strokeWidth={2} />
    <text x={1224} y={64} textAnchor="middle" fill="#ffae2c" fontSize={40} fontWeight={900}>24</text>
    <text x={1224} y={32} textAnchor="middle" fill="#555" fontSize={14} fontWeight={700}>emart</text>
    <circle cx={2191} cy={545} r={36} fill="#fff" stroke="#e2e8ea" strokeWidth={3} />
    <text x={2191} y={542} textAnchor="middle" fill="#247bb6" fontSize={31} fontWeight={900}>GS</text>
    <text x={2191} y={572} textAnchor="middle" fill="#43c0d8" fontSize={34} fontWeight={900}>25</text>
    <Bank x={1188} y={1295} /><Bank x={1779} y={1355} />
    {exits.map(([n, x, y]) => <Exit key={n} label={n} x={x} y={y} />)}
    <rect x={915} y={709} width={134} height={64} rx={32} fill="#fff" stroke="#6f97d1" strokeWidth={5} />
    <text x={982} y={757} textAnchor="middle" fill="#6f97d1" fontSize={42} fontWeight={500}>인천1</text>
    <rect x={551} y={1025} width={126} height={64} rx={32} fill="#fff" stroke="#fca62e" strokeWidth={4} />
    <text x={613} y={1071} textAnchor="middle" fill="#fca62e" fontSize={42} fontWeight={500}>인천2</text>
    <MapText item={["인천시청역", 982, 836, "#555", 48]} />
    <MapText item={["(21세기병원)", 982, 896, "#555", 48]} />
    <MapText item={["인천시청역", 612, 1149, "#555", 48]} />
    {pins.map(([x, y], i) => <Pin key={i} x={x} y={y} />)}
    <path d="M1995 1468 2038 1428Q2042 1450 2015 1460Z" opacity={0.45} />
    <path d="M1946 1384A45 45 0 0 1 2037 1384C2037 1415 2003 1437 1994 1471H1991C1982 1437 1946 1415 1946 1384Z" fill="#459bff" />
    <circle cx={1991} cy={1384} r={21} fill="#fff" />
  </MapCanvas>
);

const menu = ["홈", "자기소개", "내사진", "몇시예요"];

export default function App() {
  return (
    <Page>
      <GlobalStyle />
      <Header>
        <Nav>
          {menu.map((label) => <NavButton key={label}>{label}</NavButton>)}
        </Nav>
      </Header>
      <Main>
        <Title>
          <TitleWord $spacing={2.9}>웹프론트엔드</TitleWord>
          <TitleWord $spacing={2.4}>개발자~!</TitleWord>
          <TitleWord $spacing={-0.1} $latin>zeunala</TitleWord>
        </Title>
        <Intro>
          함께 개발하고 같이 성장하고 싶어요
          <br />
          인천 남동구 어딘가 살고 있어요!
        </Intro>
        <Tiles>
          <Tile>자기소개</Tile>
          <Tile>내 사진</Tile>
        </Tiles>
        <NeighbourhoodMap />
      </Main>
      <Footer>
        <Line>zeunala@naver.com</Line>
        <Line>https://github.com/zeunala</Line>
      </Footer>
    </Page>
  );
}
